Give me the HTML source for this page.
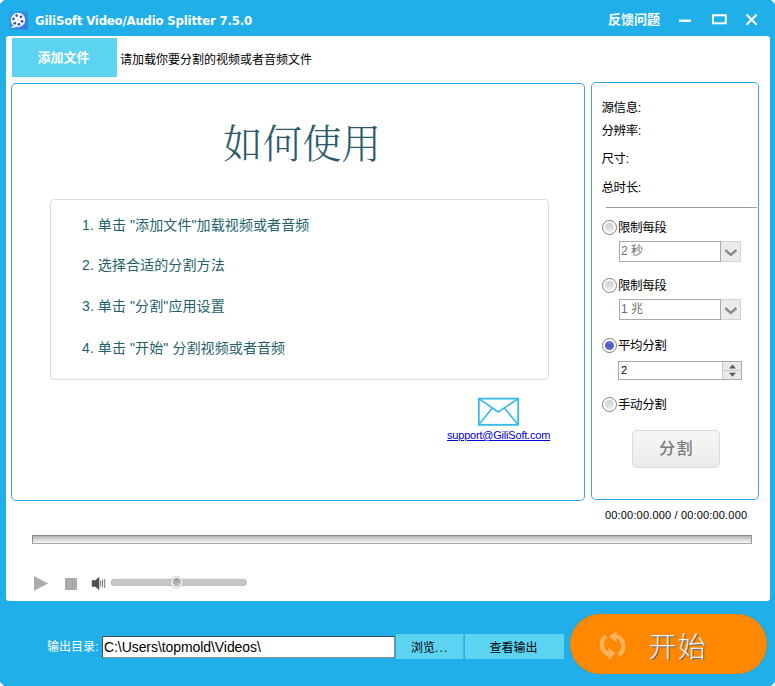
<!DOCTYPE html>
<html lang="zh-CN">
<head>
<meta charset="utf-8">
<title>GiliSoft Video/Audio Splitter 7.5.0</title>
<style>
*{box-sizing:border-box;margin:0;padding:0}
html,body{width:775px;height:686px;overflow:hidden;background:#fff}
body{font-family:"Liberation Sans","Noto Sans CJK SC",sans-serif;font-size:12px;color:#000;position:relative}
.abs{position:absolute}
#win{position:absolute;left:0;top:0;width:775px;height:686px;background:#21afea;
 clip-path:polygon(4px 0,771px 0,775px 4px,775px 682px,771px 686px,4px 686px,0 682px,0 4px)}
#title{position:absolute;left:35px;top:13px;font-size:13px;font-weight:bold;color:#fff;white-space:nowrap;line-height:16px;font-family:"DejaVu Sans","Liberation Sans",sans-serif;font-stretch:condensed;letter-spacing:-0.180px}
#feedback{position:absolute;left:608px;top:11px;font-size:13px;font-weight:bold;color:#fff;white-space:nowrap;line-height:18px}
#content{position:absolute;left:6px;top:36px;width:764px;height:565px;background:#fff;border-radius:3px}
#addbtn{position:absolute;left:12px;top:38px;width:105px;height:39px;background:#5dd3f2;color:#fff;font-weight:bold;font-size:13px;text-align:center;line-height:39px;padding-right:2px}
#hint{position:absolute;left:120px;top:51px;font-size:12px;line-height:18px;white-space:nowrap}
.panel{position:absolute;border:1px solid #2ba9ee;border-left-color:#4d9fd0;border-right-color:#4d9fd0;border-radius:5px;background:#fff}
#lp{left:11px;top:83px;width:574px;height:418px}
#rp{left:591px;top:82px;width:168px;height:418px}
#howto{position:absolute;width:574px;top:119.500px;text-align:center;font-family:"Liberation Serif","Noto Serif CJK SC",serif;font-size:39.500px;line-height:50px;color:#2b5a6a;font-weight:300;left:15px}
#steps{position:absolute;left:50px;top:199px;width:499px;height:181px;border:1px solid #dcdcdc;border-radius:4px}
.step{position:absolute;left:31px;font-size:14px;color:#235f68;line-height:20px;white-space:nowrap;letter-spacing:0.100px}
.lbl{position:absolute;left:601.500px;font-size:12.500px;letter-spacing:-0.400px;line-height:16px;white-space:nowrap}
.radio{position:absolute;left:602px;width:15px;height:15px;border-radius:50%;border:1px solid #7e7e7e;background:#fdfdfd}
.radio b{position:absolute;left:2px;top:2px;width:9px;height:9px;border-radius:50%;background:linear-gradient(#cdcdcd,#ececec)}
.radio.on b{background:linear-gradient(#6d7cdc 0,#4a5abc 45%,#5c6cc8 100%)}
.rl{position:absolute;left:618px;font-size:12.500px;letter-spacing:-0.400px;line-height:16px;white-space:nowrap}
.combo{position:absolute;left:619px;width:123px;height:21px;background:#fff;font-size:12px;color:#6d6d6d;line-height:19px}
.combo span{position:absolute;left:0;top:0;width:102px;height:21px;border:1px solid #a9a9a9;padding-left:1px}
.combo i{position:absolute;left:102px;top:0;width:20px;height:21px;background:#ebebeb;border:1px solid #d2d2d2;border-left:0}
.combo i svg{position:absolute;left:0;top:0}
.spin{position:absolute;left:618px;width:123.500px;height:19px;background:#fff;border:1px solid #a9a9a9;font-size:11px;color:#000;line-height:17px;font-family:"Liberation Sans",sans-serif}
.spin span{position:absolute;left:2px;top:0}
.spin i{position:absolute;right:0;top:0;width:19px;height:17px;background:#e9e9e9;border-left:1px solid #c8c8c8}
.spin i svg{position:absolute;left:0;top:0}
</style>
</head>
<body>
<div id="win">
 <svg class="abs" style="left:9px;top:11px" width="20" height="20" viewBox="0 0 20 20">
  <defs><linearGradient id="ig" x1="0" y1="0" x2="1" y2="1"><stop offset="0" stop-color="#3a80e6" stop-opacity="0.150"/><stop offset="0.500" stop-color="#3a78e4" stop-opacity="0.600"/><stop offset="1" stop-color="#3d6ce0" stop-opacity="0.950"/></linearGradient></defs>
  <rect x="0" y="-0.500" width="19" height="19" rx="1.500" fill="url(#ig)"/>
  <circle cx="9" cy="9" r="7.2" fill="#fff"/>
  <path d="M3 16.2 L7 15.4" stroke="#fff" stroke-width="1.4" stroke-linecap="round"/>
  <g fill="#2a50c0">
   <circle cx="7.6" cy="4.6" r="1.35"/><circle cx="12" cy="5.8" r="1.35"/><circle cx="13.1" cy="10.3" r="1.35"/>
   <circle cx="10" cy="13.4" r="1.35"/><circle cx="5.8" cy="12.3" r="1.35"/><circle cx="4.5" cy="7.9" r="1.35"/>
  </g>
  <circle cx="8.8" cy="9" r="1" fill="#e8d8f0"/>
 </svg>
 <div id="title">GiliSoft Video/Audio Splitter 7.5.0</div>
 <div id="feedback">反馈问题</div>
 <svg class="abs" style="left:670px;top:8px" width="100" height="24" viewBox="0 0 100 24">
  <rect x="9" y="11.600" width="12" height="2.300" fill="#fff"/>
  <rect x="43" y="7.300" width="12.800" height="8" fill="none" stroke="#fff" stroke-width="2"/>
  <path d="M76.500 6.500 L86.700 16.700 M86.700 6.500 L76.500 16.700" stroke="#fff" stroke-width="2" fill="none"/>
 </svg>
 <div id="content"></div>
 <div id="addbtn">添加文件</div>
 <div id="hint">请加载你要分割的视频或者音频文件</div>

 <div id="lp" class="panel"></div>
 <div id="howto">如何使用</div>
 <div id="steps">
  <div class="step" style="top:15px">1. 单击 "添加文件"加载视频或者音频</div>
  <div class="step" style="top:55px">2. 选择合适的分割方法</div>
  <div class="step" style="top:96px">3. 单击 "分割"应用设置</div>
  <div class="step" style="top:138px">4. 单击 "开始" 分割视频或者音频</div>
 </div>
 <svg class="abs" style="left:476px;top:396px" width="46" height="34" viewBox="0 0 46 34">
  <rect x="2.800" y="2.600" width="39.400" height="26.200" fill="none" stroke="#35b8ea" stroke-width="1.800"/>
  <path d="M2.800 2.600 L22.200 16 L42.200 2.600 M2.800 28.800 L16.500 11.800 M42.200 28.800 L28.200 11.800" fill="none" stroke="#35b8ea" stroke-width="1.600"/>
 </svg>
 <div class="abs" style="left:447px;top:428px;font-size:11px;line-height:14px;color:#0000d8;text-decoration:underline;white-space:nowrap;letter-spacing:-0.2px">support@GiliSoft.com</div>

 <div id="rp" class="panel"></div>
 <div class="lbl" style="top:100px">源信息:</div>
 <div class="lbl" style="top:123px">分辨率:</div>
 <div class="lbl" style="top:151px">尺寸:</div>
 <div class="lbl" style="top:180px">总时长:</div>
 <div class="abs" style="left:606px;top:207px;width:151px;height:1px;background:#9c9c9c"></div>

 <div class="radio" style="top:220px"><b></b></div><div class="rl" style="top:220px">限制每段</div>
 <div class="combo" style="top:241px"><span>2 秒</span><i><svg width="21" height="19" viewBox="0 0 21 19"><path d="M4.200 8 L9.800 12.800 L15.400 8" fill="none" stroke="#8c8c8c" stroke-width="2.400"/></svg></i></div>
 <div class="radio" style="top:278px"><b></b></div><div class="rl" style="top:278px">限制每段</div>
 <div class="combo" style="top:299px"><span>1 兆</span><i><svg width="21" height="19" viewBox="0 0 21 19"><path d="M4.200 8 L9.800 12.800 L15.400 8" fill="none" stroke="#8c8c8c" stroke-width="2.400"/></svg></i></div>
 <div class="radio on" style="top:338px"><b></b></div><div class="rl" style="top:338px">平均分割</div>
 <div class="spin" style="top:361px"><span>2</span><i><svg width="19" height="17" viewBox="0 0 19 17"><rect x="0" y="8" width="19" height="1" fill="#c8c8c8"/><path d="M6 6.500 L9.500 2.500 L13 6.500 Z M6 10.800 L9.500 14.800 L13 10.800 Z" fill="#5a5a5a"/></svg></i></div>
 <div class="radio" style="top:397px"><b></b></div><div class="rl" style="top:396.500px">手动分割</div>
 <div class="abs" style="left:632px;top:430px;width:88px;height:38px;border:1px solid #dadada;border-radius:5px;background:linear-gradient(#f7f7f7,#ebebeb);font-size:16px;font-weight:500;color:#7a7a7a;text-align:center;line-height:36px;letter-spacing:1.500px;padding-left:1px">分割</div>

 <div class="abs" style="left:605px;top:508px;font-size:11px;line-height:14px;white-space:nowrap;letter-spacing:0.170px">00:00:00.000 / 00:00:00.000</div>
 <div class="abs" style="left:32px;top:535px;width:720px;height:9px;border:1px solid #8c8c8c;border-bottom-color:#aaa;border-right-color:#999;background:linear-gradient(#a9adb1,#d4d7da 45%,#f4f4f4)"></div>

 <svg class="abs" style="left:30px;top:570px" width="230" height="26" viewBox="0 0 230 26">
  <path d="M4 6 L4 20.800 L18.200 13.600 Z" fill="#aaa"/>
  <rect x="35" y="8" width="12" height="12" fill="#ababab"/>
  <path d="M61.800 10.200 h3.500 l4 -3.400 v13.400 l-4 -3.400 h-3.500 z" fill="#505050"/>
  <path d="M70.700 10.500 v6 M72.600 9.600 v7.800 M74.700 9 v9" stroke="#6a6a6a" stroke-width="0.900"/>
  <rect x="81" y="9.300" width="135.500" height="6.200" rx="3.100" fill="#c6c6c6" stroke="#b4b4b4" stroke-width="0.800"/>
  <circle cx="146.700" cy="12.200" r="5.900" fill="#fff" stroke="#b8b8b8" stroke-width="0.700"/>
  <circle cx="146.700" cy="12.200" r="4.200" fill="url(#tg)"/>
  <defs><linearGradient id="tg" x1="0" y1="0" x2="0" y2="1"><stop offset="0" stop-color="#9898a6"/><stop offset="1" stop-color="#c2c2cc"/></linearGradient></defs>
 </svg>

 <div class="abs" style="left:47px;top:639px;font-size:12px;line-height:16px;color:#fff;white-space:nowrap">输出目录:</div>
 <div class="abs" style="left:102px;top:636px;width:293px;height:22px;background:#fff;border:1px solid #4a4a4a;border-right-color:#8a8a8a;border-bottom-color:#8a8a8a;font-size:14px;line-height:20px;padding-left:1px;white-space:nowrap;letter-spacing:-0.070px">C:\Users\topmold\Videos\</div>
 <div class="abs" style="left:396px;top:634px;width:68px;height:25px;background:#5dd3f2;font-size:12px;text-align:left;padding-left:15px;line-height:29px;border-right:1px solid #3fb8e8">浏览<span style="letter-spacing:1.200px">...</span></div>
 <div class="abs" style="left:465px;top:634px;width:99px;height:25px;background:#5dd3f2;font-size:12px;text-align:center;line-height:29px;padding-right:2px">查看输出</div>
 <div class="abs" style="left:570px;top:613.500px;width:196.500px;height:60.500px;border-radius:31px;background:#ff8800;box-shadow:0 0 1px rgba(90,80,40,0.5)"></div>
 <svg class="abs" style="left:596px;top:627px" width="34" height="36" viewBox="0 0 34 36">
  <g fill="none" stroke="#ffb35c" stroke-width="4.200">
   <path d="M22.500 28 A11.200 10.800 0 0 0 20 8.900"/>
   <path d="M10 9.200 A11.600 10.800 0 0 0 12.800 27.400"/>
  </g>
  <path d="M20.500 3.200 L13.300 9.800 L20.500 15.600 Z" fill="#ffb35c"/>
  <path d="M12.500 20.700 L19.600 26.300 L12.500 33 Z" fill="#ffb35c"/>
 </svg>
 <div class="abs" style="left:648.500px;top:628px;font-size:28px;line-height:40px;color:#efefef;font-weight:300;letter-spacing:1.300px;text-shadow:1px 1px 0 rgba(100,105,115,1);white-space:nowrap">开始</div>
</div>
</body>
</html>
